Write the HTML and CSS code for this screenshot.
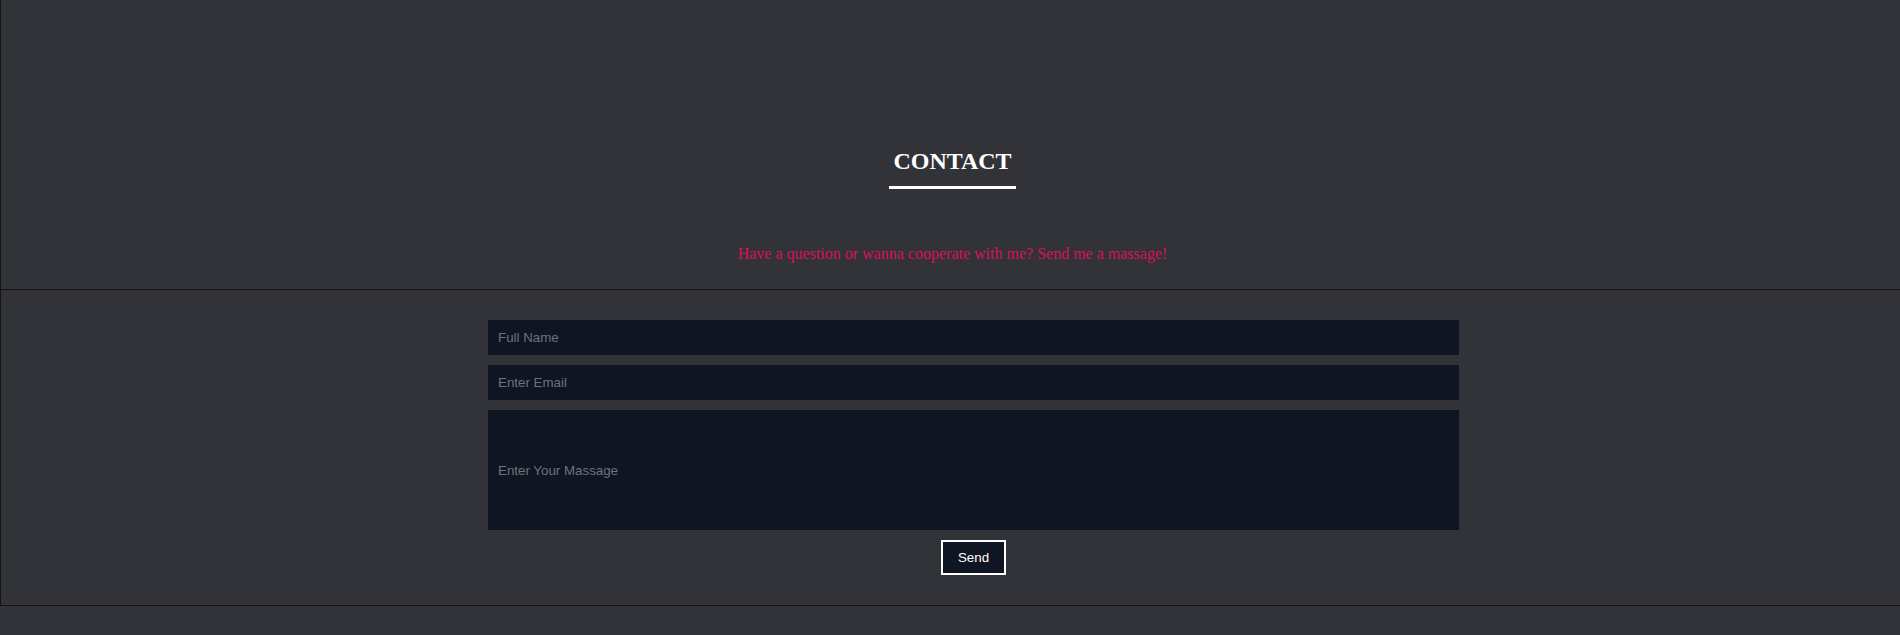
FILE: index.html
```html
<!DOCTYPE html>
<html lang="en">
<head>
<meta charset="utf-8">
<title>Contact</title>
<link rel="stylesheet" href="styles.css">
</head>
<body>
<section class="contact-head">
  <h2 class="title">CONTACT</h2>
  <p class="subtitle">Have a question or wanna cooperate with me? Send me a massage!</p>
</section>
<section class="contact-form-wrap">
  <form class="contact-form">
    <input class="field" type="text" placeholder="Full Name">
    <input class="field" type="email" placeholder="Enter Email">
    <input class="field field-msg" type="text" placeholder="Enter Your Massage">
    <button class="send" type="button">Send</button>
  </form>
</section>
</body>
</html>
```
FILE: styles.css
```css
html, body {
  margin: 0;
  padding: 0;
}
body {
  background: #313338;
  height: 635px;
  overflow: hidden;
  font-family: "Liberation Serif", "Times New Roman", serif;
}
.contact-head {
  border-left: 1px solid #141414;
  border-bottom: 1px solid #141414;
  padding: 147px 0 26px 4px;
  display: flex;
  flex-direction: column;
  align-items: center;
}
.title {
  margin: 0;
  font-size: 24px;
  line-height: 28px;
  font-weight: bold;
  color: #ffffff;
  padding: 0 4px 11px;
  border-bottom: 3px solid #ffffff;
}
.subtitle {
  margin: 56px 0 0;
  font-size: 16px;
  line-height: 18px;
  color: #d9105a;
}
.contact-form-wrap {
  border-left: 1px solid #141414;
  border-bottom: 1px solid #141414;
  padding: 30px 0;
}
.contact-form {
  width: 971px;
  margin-left: 487px;
  display: flex;
  flex-direction: column;
  align-items: center;
  gap: 10px;
}
.field {
  box-sizing: border-box;
  width: 100%;
  height: 35px;
  margin: 0;
  border: none;
  outline: none;
  background: #0f1523;
  color: #cfcfcf;
  padding: 0 10px;
  font-family: "Liberation Sans", Arial, sans-serif;
  font-size: 13.333px;
}
.field::placeholder {
  color: #6f7278;
}
.field-msg {
  height: 120px;
}
.send {
  box-sizing: border-box;
  width: 65px;
  height: 35px;
  margin: 0;
  padding: 0;
  background: #0f1523;
  border: 2px solid #ffffff;
  color: #ffffff;
  font-family: "Liberation Sans", Arial, sans-serif;
  font-size: 13.333px;
  cursor: pointer;
}
```
